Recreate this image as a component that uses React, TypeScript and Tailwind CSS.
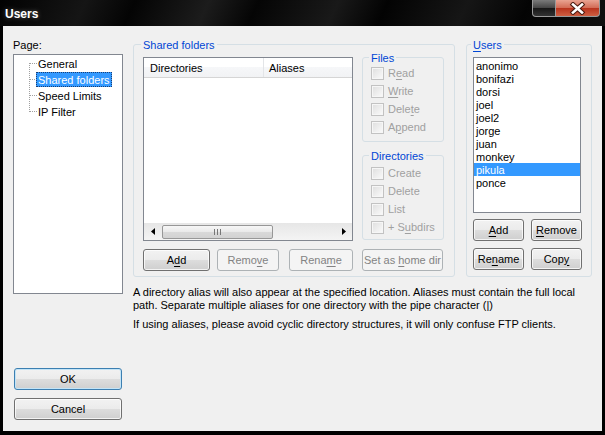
import type { ReactNode } from 'react';

const users = ['anonimo', 'bonifazi', 'dorsi', 'joel', 'joel2', 'jorge', 'juan', 'monkey', 'pikula', 'ponce'];
const pages = ['General', 'Shared folders', 'Speed Limits', 'IP Filter'];

// access-key letter, drawn underlined like a Win32 mnemonic
function Key({ children }: { children: ReactNode }) {
    return <span className="underline underline-offset-[2px] decoration-1">{children}</span>;
}

interface ButtonProps {
    children: ReactNode;
    className?: string;
    disabled?: boolean;
    primary?: boolean;
}

function Button({ children, className = '', disabled, primary }: ButtonProps) {
    let look = 'border-[#707070] bg-[linear-gradient(#f2f2f2,#ebebeb_50%,#dddddd_50%,#cfcfcf)] shadow-[inset_0_0_0_1px_rgba(255,255,255,0.75)] text-black';
    if (disabled) {
        look = 'border-[#adb2b5] bg-[#f4f4f4] text-[#838383]';
    } else if (primary) {
        look = 'border-[#3c7fb1] bg-[linear-gradient(#f2f2f2,#ebebeb_50%,#dddddd_50%,#cfcfcf)] shadow-[inset_0_0_0_1px_#c3e4f7] text-black';
    }
    return (
        <div className={`h-[22px] flex items-center justify-center rounded-[3px] border ${look} ${className}`}>
            <span className="whitespace-pre leading-[13px]">{children}</span>
        </div>
    );
}

function Check({ label }: { label: ReactNode }) {
    return (
        <div className="h-[18px] flex items-center">
            <span className="w-[13px] h-[13px] border border-[#c2c2c2] bg-[linear-gradient(135deg,#dedede,#fbfbfb)] shadow-[inset_0_0_0_1px_#f6f6f6]" />
            <span className="ml-[4px] text-[#a0a0a0]">{label}</span>
        </div>
    );
}

function Group({ title, className = '', children }: { title: ReactNode; className?: string; children: ReactNode }) {
    return (
        <fieldset className={`border border-[#d5dfe5] rounded-[3px] ${className}`}>
            <legend className="-ml-[2px] px-[2px] h-[13px] leading-[14px] text-[#0046d5]">{title}</legend>
            {children}
        </fieldset>
    );
}

function Arrow({ dir }: { dir: 'left' | 'right' }) {
    return (
        <svg width="4" height="7" viewBox="0 0 4 7">
            {dir === 'left' ? <path d="M4 0 L0 3.5 L4 7 Z" fill="#000" /> : <path d="M0 0 L4 3.5 L0 7 Z" fill="#000" />}
        </svg>
    );
}

function TitleBar() {
    return (
        <div className="h-[26px] flex items-start pl-[5px] pr-[5px] bg-[linear-gradient(115deg,#020202_0%,#151515_14%,#040404_22%,#1c1c1c_34%,#050505_42%,#191919_55%,#030303_63%,#161616_76%,#040404_86%,#101010_100%)]">
            <div className="pt-[7px] text-[12px] leading-[14px] font-bold text-white [text-shadow:0_0_5px_rgba(255,255,255,0.35)]">Users</div>
            <div className="ml-auto flex">
                <div className="w-[24px] h-[17px] rounded-bl-[4px] border border-t-0 border-[#9a9a9a] bg-[linear-gradient(#7a7a7a,#444_50%,#161616_50%,#333)]" />
                <div className="w-[44px] h-[17px] rounded-br-[4px] border border-t-0 border-l-0 border-[#9a9a9a] bg-[linear-gradient(#e9a392,#d26a54_50%,#b8321c_50%,#cf5f42)] flex items-center justify-center">
                    <svg width="17" height="13" viewBox="0 0 17 13">
                        <path d="M4 2.5 L13 10.5 M13 2.5 L4 10.5" stroke="#4a1a10" strokeWidth="4.6" strokeLinecap="square" />
                        <path d="M4 2.5 L13 10.5 M13 2.5 L4 10.5" stroke="#fff" strokeWidth="2.6" strokeLinecap="square" />
                    </svg>
                </div>
            </div>
        </div>
    );
}

function PageTree() {
    return (
        <div className="mt-[3px] h-[240px] border border-[#828790] bg-white flex">
            <svg width="23" height="64" viewBox="0 0 23 64" className="shrink-0">
                <path d="M15.5 8 V57" stroke="#a0a0a0" strokeDasharray="1 1" />
                {[8.5, 24.5, 40.5, 56.5].map((y) => (
                    <path key={y} d={`M16 ${y} H23`} stroke="#a0a0a0" strokeDasharray="1 1" />
                ))}
            </svg>
            <div className="flex flex-col">
                {pages.map((p) => (
                    <div key={p} className="h-[16px] flex items-center">
                        {p === 'Shared folders' ? (
                            <span className="h-[15px] leading-[14px] px-[1px] bg-[#3399ff] text-white border border-dotted border-[#1b3f73] -ml-[1px]">{p}</span>
                        ) : (
                            <span className="h-[15px] leading-[16px] px-[1px]">{p}</span>
                        )}
                    </div>
                ))}
            </div>
        </div>
    );
}

function SharedList() {
    return (
        <div className="mt-[6px] w-[210px] h-[184px] border border-[#828790] bg-white flex flex-col">
            <div className="h-[20px] flex border-b border-[#d5d5d5] bg-[linear-gradient(#ffffff,#ffffff_45%,#f6f7f9_45%,#f1f2f4)]">
                <div className="w-[120px] pl-[6px] pt-[2px] flex items-center border-r border-[#e3e5e8]">Directories</div>
                <div className="flex-1 pl-[5px] pt-[2px] flex items-center">Aliases</div>
            </div>
            <div className="flex-1" />
            <div className="h-[17px] flex items-center bg-[linear-gradient(#e6e6e6,#f4f4f4)]">
                <div className="w-[17px] h-full flex items-center justify-center">
                    <Arrow dir="left" />
                </div>
                <div className="ml-[1px] w-[111px] h-[14px] rounded-[2px] border border-[#979797] bg-[linear-gradient(#f7f7f7,#e9e9e9_50%,#d9d9d9_50%,#d2d2d2)] flex items-center justify-center gap-[2px]">
                    <span className="w-[1px] h-[6px] bg-[#777]" />
                    <span className="w-[1px] h-[6px] bg-[#777]" />
                    <span className="w-[1px] h-[6px] bg-[#777]" />
                </div>
                <div className="flex-1" />
                <div className="w-[17px] h-full flex items-center justify-center">
                    <Arrow dir="right" />
                </div>
            </div>
        </div>
    );
}

export default function App() {
    return (
        <div className="w-[605px] h-[435px] bg-black flex flex-col overflow-hidden text-[11px] leading-[13px] text-black font-['Liberation_Sans',Arial,sans-serif] select-none">
            <TitleBar />
            <div className="flex-1 mx-[3px] mb-[4px] bg-[#f0f0f0] flex pl-[10px] pt-[12px]">
                {/* page selector and dialog buttons */}
                <div className="w-[110px] flex flex-col">
                    <div className="h-[13px] leading-[14px]">Page:</div>
                    <PageTree />
                    <Button primary className="mt-[74px] mx-[1px]">OK</Button>
                    <Button className="mt-[8px] mx-[1px]">Cancel</Button>
                </div>

                <div className="ml-[10px] flex flex-col">
                    <div className="flex">
                        <Group title="Shared folders" className="w-[322px] h-[239px] pl-[9px]">
                            <div className="flex items-start">
                                <SharedList />
                                <div className="ml-[9px] w-[82px] flex flex-col">
                                    <Group title="Files" className="h-[91px] pl-[8px]">
                                        <Check label={<>R<Key>e</Key>ad</>} />
                                        <Check label={<><Key>W</Key>rite</>} />
                                        <Check label={<>Dele<Key>t</Key>e</>} />
                                        <Check label={<>A<Key>p</Key>pend</>} />
                                    </Group>
                                    <Group title="Directories" className="mt-[7px] h-[91px] pl-[8px] pt-[2px]">
                                        <Check label="Create" />
                                        <Check label="Delete" />
                                        <Check label="List" />
                                        <Check label={<>+ S<Key>u</Key>bdirs</>} />
                                    </Group>
                                </div>
                            </div>
                            <div className="mt-[8px] flex">
                                <Button className="w-[67px]">A<Key>d</Key>d</Button>
                                <Button disabled className="ml-[7px] w-[62px]">Remo<Key>v</Key>e</Button>
                                <Button disabled className="ml-[10px] w-[64px]">Rena<Key>m</Key>e</Button>
                                <Button disabled className="ml-[9px] w-[81px]">Set as <Key>h</Key>ome dir</Button>
                            </div>
                        </Group>

                        <Group title={<><Key>U</Key>sers</>} className="ml-[11px] w-[126px] h-[239px] pl-[6px]">
                            <div className="mt-[6px] w-[108px] h-[156px] border border-[#828790] bg-white pt-[1px]">
                                {users.map((u) => (
                                    <div key={u} className={`h-[13px] leading-[15px] pl-[2px] ${u === 'pikula' ? 'bg-[#3399ff] text-white' : ''}`}>
                                        {u}
                                    </div>
                                ))}
                            </div>
                            <div className="mt-[6px] flex gap-[7px]">
                                <Button className="w-[51px]"><Key>A</Key>dd</Button>
                                <Button className="w-[51px]"><Key>R</Key>emove</Button>
                            </div>
                            <div className="mt-[7px] flex gap-[7px]">
                                <Button className="w-[51px]">Re<Key>n</Key>ame</Button>
                                <Button className="w-[51px]">Cop<Key>y</Key></Button>
                            </div>
                        </Group>
                    </div>

                    <div className="mt-[9px] whitespace-nowrap">
                        A directory alias will also appear at the specified location. Aliases must contain the full local
                        <br />
                        path. Separate multiple aliases for one directory with the pipe character (|)
                    </div>
                    <div className="mt-[6px] whitespace-nowrap">
                        If using aliases, please avoid cyclic directory structures, it will only confuse FTP clients.
                    </div>
                </div>
            </div>
        </div>
    );
}
